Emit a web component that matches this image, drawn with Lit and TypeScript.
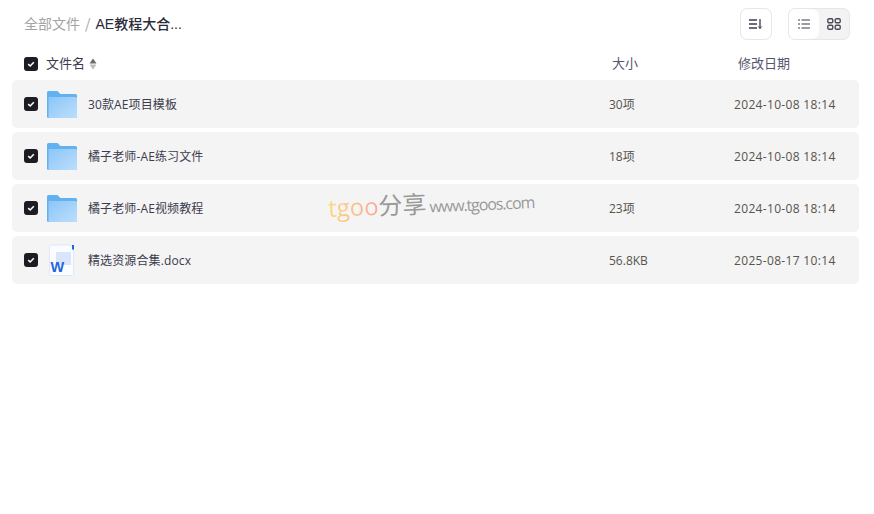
import { LitElement, html, css } from "lit";
import { customElement } from "lit/decorators.js";

const rows = [
  { name: "30款AE项目模板", size: "30项", date: "2024-10-08 18:14", type: "folder" },
  { name: "橘子老师-AE练习文件", size: "18项", date: "2024-10-08 18:14", type: "folder" },
  { name: "橘子老师-AE视频教程", size: "23项", date: "2024-10-08 18:14", type: "folder" },
  { name: "精选资源合集.docx", size: "56.8KB", date: "2025-08-17 10:14", type: "doc" },
];

const check = html`<span class="check"><svg width="10" height="10" viewBox="0 0 10 10"><path d="M2.200 5.200 L4.200 7 L7.800 3.200" fill="none" stroke="#fff" stroke-width="1.600"/></svg></span>`;

const folder = html`<svg class="icon" width="30" height="30" viewBox="0 0 30 30">
  <defs><linearGradient id="fg" x1="0" y1="0" x2="1" y2="1"><stop offset="0" stop-color="#8cc6f8"/><stop offset="1" stop-color="#bcdefc"/></linearGradient></defs>
  <path d="M0 3.500a1.500 1.500 0 0 1 1.500-1.500h9l3 3h15a1.500 1.500 0 0 1 1.500 1.500v21a1.500 1.500 0 0 1-1.500 1.500h-27a1.500 1.500 0 0 1-1.500-1.500z" fill="#62b1f1"/>
  <path d="M1.500 8h27a1.500 1.500 0 0 1 1.500 1.500v18a1.500 1.500 0 0 1-1.500 1.500h-27z" fill="url(#fg)"/>
  <rect x="22" y="9.500" width="5" height="2.500" rx="1" fill="#a3d0f7"/>
</svg>`;

const doc = html`<svg class="icon" width="30" height="32" viewBox="0 0 30 32">
  <path d="M3.500 1h20l3 4v25.500a1 1 0 0 1-1 1h-22a1 1 0 0 1-1-1v-28.500a1 1 0 0 1 1-1z" fill="#fbfcff" stroke="#dde8fa"/>
  <rect x="25" y="1" width="2" height="4.500" fill="#1f66dc"/>
  <rect x="9" y="8" width="15" height="13" fill="#d8e5fa"/>
  <text x="3.500" y="27.500" class="w">W</text>
</svg>`;

@customElement("app-root")
export class AppRoot extends LitElement {
  static styles = css`
    :host {
      display: block;
      width: 874px;
      height: 514px;
      background: #fff;
      font-family: "Open Sans", "Noto Sans CJK SC", sans-serif;
      color: #3b3b4d;
      position: relative;
      overflow: hidden;
    }
    .top {
      display: flex;
      align-items: center;
      height: 32px;
      padding: 8px 24px 0 24px;
    }
    .crumbs {
      display: flex;
      align-items: center;
      flex: 1;
      font-size: 14px;
      font-family: "Noto Sans CJK SC", sans-serif;
      padding-bottom: 2px;
    }
    .crumb-root { color: #a3a3a3; }
    .sep { color: #a3a3a3; margin: 0 5px; }
    .crumb-cur { color: #2b2b3a; font-weight: 500; font-family: "Liberation Sans", "Noto Sans CJK SC", sans-serif; }
    .tools { display: flex; gap: 16px; }
    .btn {
      width: 30px;
      height: 30px;
      border: 1px solid #e6e6e6;
      border-radius: 7px;
      display: flex;
      align-items: center;
      justify-content: center;
    }
    .switch {
      width: 60px;
      height: 30px;
      border: 1px solid #e6e6e6;
      border-radius: 7px;
      display: flex;
      overflow: hidden;
      background: #f3f3f3;
    }
    .seg {
      flex: 1;
      display: flex;
      align-items: center;
      justify-content: center;
    }
    .seg.on { background: #fff; border-radius: 0 7px 7px 0; }
    .head {
      display: grid;
      grid-template-columns: 600px 126px 1fr;
      height: 32px;
      margin-top: 8px;
      padding: 0 12px;
      align-items: center;
      font-size: 13px;
      font-family: "Noto Sans CJK SC", sans-serif;
      color: #55556a;
    }
    .head-txt { padding-bottom: 3px; }
    .head-name { display: flex; align-items: center; padding-left: 12px; color: #3b3b4d; }
    .head-name .check { margin-right: 8px; }
    .sort { margin-left: 4px; display: block; }
    .list { display: flex; flex-direction: column; gap: 4px; padding: 0 15px 0 12px; }
    .row {
      display: grid;
      grid-template-columns: 597px 125px 1fr;
      align-items: center;
      height: 48px;
      background: #f4f4f4;
      border-radius: 5px;
      font-size: 12px;
    }
    .name { display: flex; align-items: center; padding-left: 12px; color: #3b3b4d; }
    .name-txt { letter-spacing: 0.120px; }
    .icon { margin-left: 9px; margin-right: 11px; flex: none; }
    .size, .date { color: #57534e; font-size: 12px; }
    .date { letter-spacing: 0.330px; }
    .check {
      width: 14px;
      height: 14px;
      border-radius: 3px;
      background: #1c1c22;
      display: inline-flex;
      align-items: center;
      justify-content: center;
      flex: none;
    }
    .w { font: 700 14.500px "Liberation Sans", sans-serif; fill: #1f66dc; }
    .mark {
      position: absolute;
      left: 328px;
      top: 190px;
      display: flex;
      align-items: baseline;
      transform: rotate(-2.500deg);
      transform-origin: left center;
      white-space: nowrap;
    }
    .m1 {
      font: 24px "Open Sans", sans-serif;
      background: linear-gradient(90deg, #fbd978, #fba8a0);
      -webkit-background-clip: text;
      background-clip: text;
      color: transparent;
    }
    .m2 { font: 24px "Noto Sans CJK SC", sans-serif; color: #999; line-height: 34px; }
    .m3 { font: 16px "Open Sans", sans-serif; color: #999; margin-left: 3px; letter-spacing: -1.100px; }
  `;

  render() {
    return html`
      <div class="top">
        <div class="crumbs">
          <span class="crumb-root">全部文件</span><span class="sep">/</span><span class="crumb-cur">AE教程大合...</span>
        </div>
        <div class="tools">
          <div class="btn">
            <svg width="14" height="12" viewBox="0 0 14 12" fill="none" stroke="#3b3b4d" stroke-width="1.300">
              <path d="M0 2h8M0 6h8M0 10h8M11 1v9.500"/><path d="M9.300 8.500 11 10.500 12.700 8.500" stroke-width="1"/>
            </svg>
          </div>
          <div class="switch">
            <div class="seg on">
              <svg width="12" height="10" viewBox="0 0 12 10" stroke="#3b3b4d" stroke-width="1.100" fill="none">
                <path d="M0 1h2M0 5h2M0 9h2M3.500 1h8.500M3.500 5h8.500M3.500 9h8.500"/>
              </svg>
            </div>
            <div class="seg">
              <svg width="14" height="12" viewBox="0 0 14 12" stroke="#4a4a58" stroke-width="1.400" fill="none">
                <rect x=".8" y=".8" width="5" height="4" rx="1.200"/><rect x="8.200" y=".8" width="5" height="4" rx="1.200"/>
                <rect x=".8" y="7.200" width="5" height="4" rx="1.200"/><rect x="8.200" y="7.200" width="5" height="4" rx="1.200"/>
              </svg>
            </div>
          </div>
        </div>
      </div>
      <div class="head">
        <div class="head-name">${check}<span class="head-txt">文件名</span>
          <svg class="sort" width="8" height="12" viewBox="0 0 8 12"><path d="M4 .5 7.500 5.500H.5z" fill="#6a6a6a"/><path d="M4 11.500 .5 6.500h7z" fill="#bdbdbd"/></svg>
        </div>
        <div class="head-txt">大小</div>
        <div class="head-txt">修改日期</div>
      </div>
      <div class="list">
        ${rows.map(
          (r) => html`<div class="row">
            <div class="name">${check}${r.type === "folder" ? folder : doc}<span class="name-txt">${r.name}</span></div>
            <div class="size">${r.size}</div>
            <div class="date">${r.date}</div>
          </div>`
        )}
      </div>
      <div class="mark"><span class="m1">tgoo</span><span class="m2">分享</span><span class="m3">www.tgoos.com</span></div>
    `;
  }
}
